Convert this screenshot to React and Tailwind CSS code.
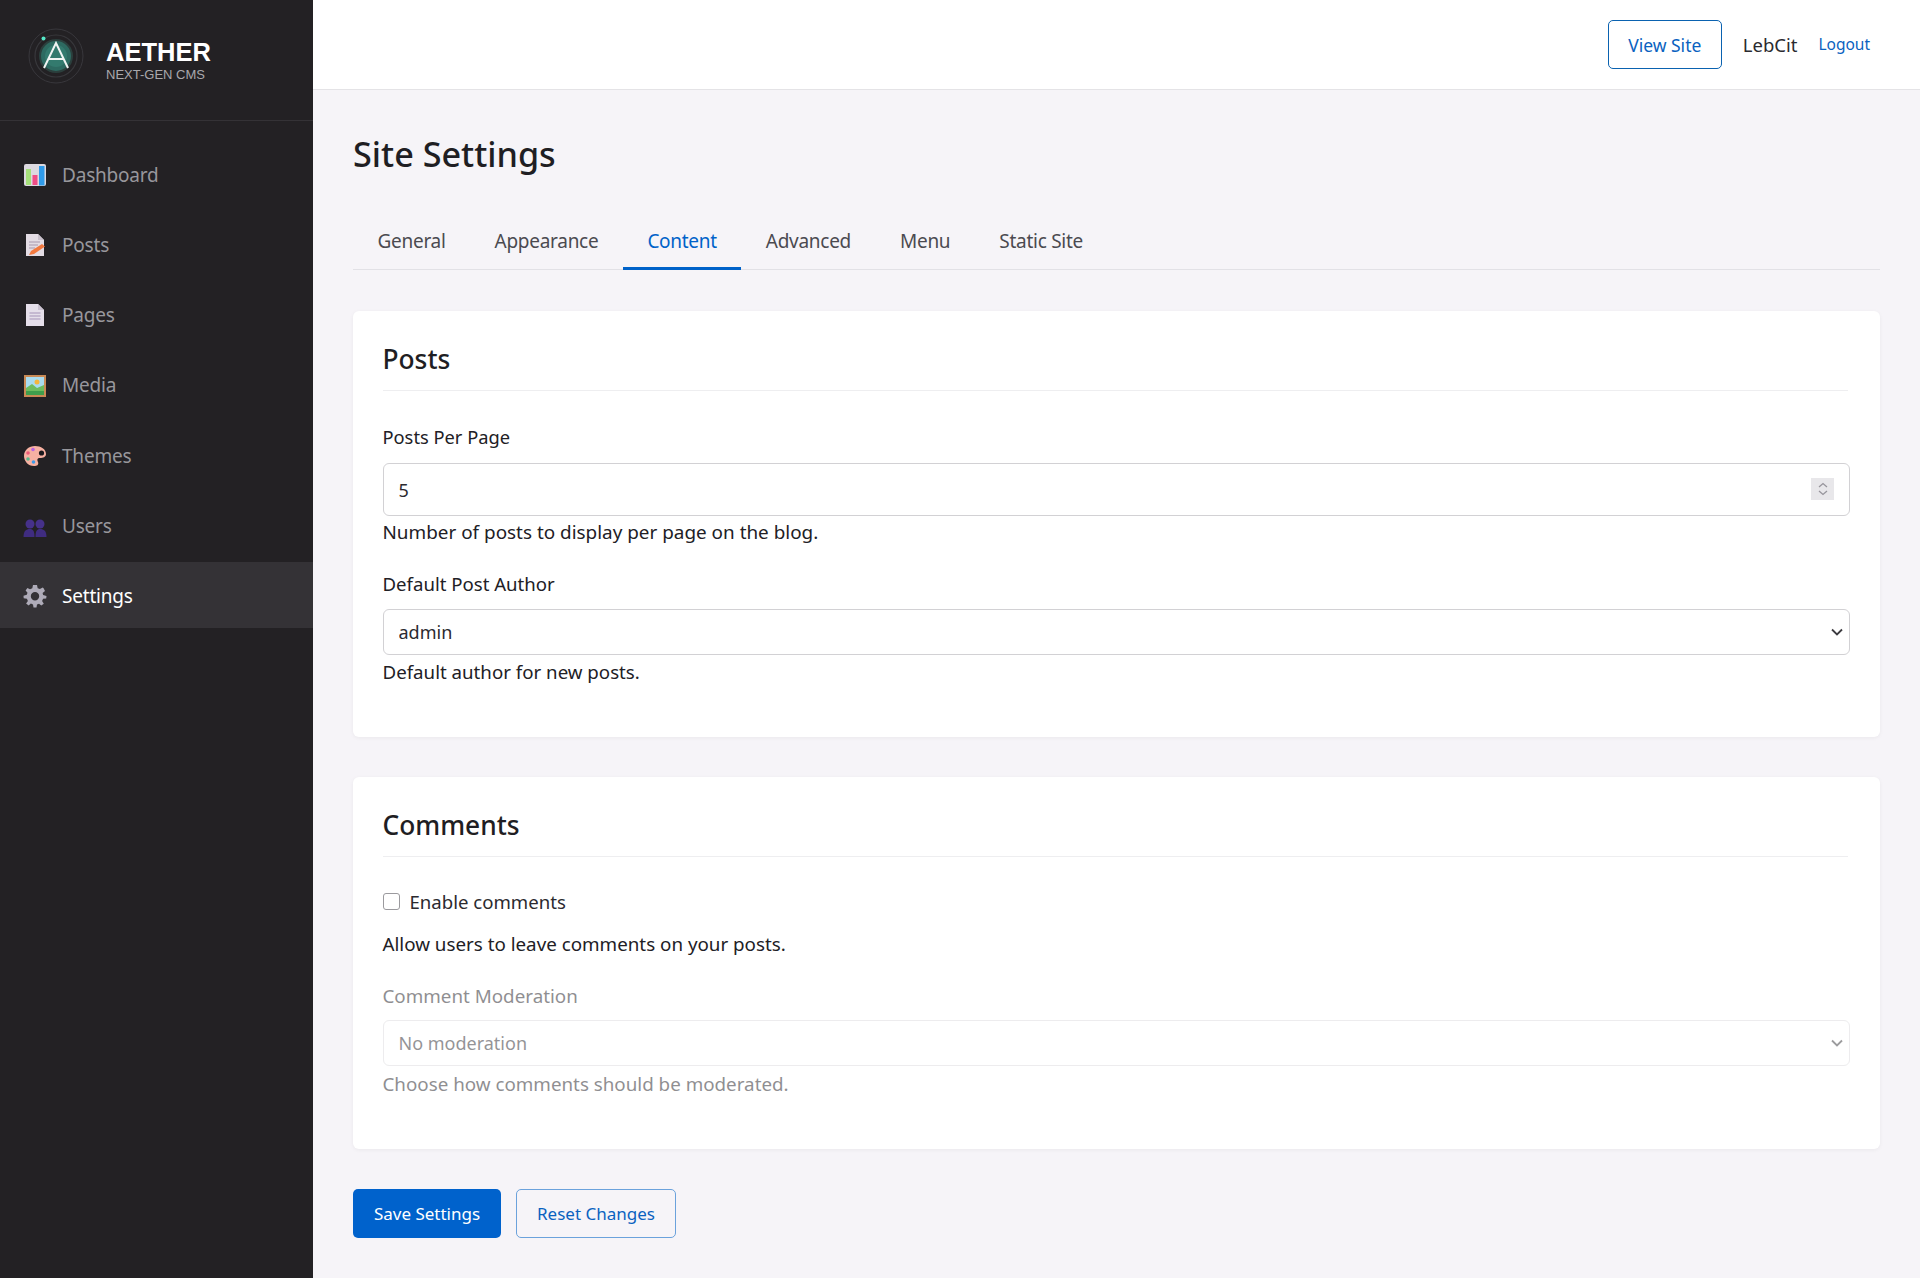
function Logo() {
  return (
    <svg width="56" height="56" viewBox="0 0 56 56" className="shrink-0">
      <circle cx="28" cy="28" r="27" fill="none" stroke="#38373c" strokeWidth="1" />
      <circle cx="28" cy="28" r="21" fill="none" stroke="#38383c" strokeWidth="1.2" />
      <circle cx="28" cy="28" r="16" fill="#2d6a61" stroke="#2b3f3d" strokeWidth="2" />
      <circle cx="28" cy="28" r="11" fill="#3a8a7c" opacity="0.5" />
      <path d="M16 40 L28 15 L40 40 M21 31 H35" fill="none" stroke="#f1f4f3" strokeWidth="2" />
      <circle cx="15.5" cy="10.5" r="2" fill="#55e8c8" />
    </svg>
  );
}
const icons = {
  Dashboard: (
    <svg width="24" height="24" viewBox="0 0 24 24">
      <rect x="1" y="1" width="22" height="22" rx="2" fill="#dcd9e0" />
      <rect x="3" y="6" width="5" height="16" fill="#a5e07a" />
      <rect x="9.5" y="12" width="5" height="10" fill="#ef4d86" />
      <rect x="16" y="3" width="5.5" height="19.5" fill="#2f9bea" />
    </svg>
  ),
  Posts: (
    <svg width="24" height="24" viewBox="0 0 24 24">
      <path d="M3 1 H15 L21 7 V23 H3 Z" fill="#e3dce4" />
      <path d="M15 1 L21 7 H15 Z" fill="#c9c1cc" />
      <path d="M6 9 H17 M6 12 H15 M6 15 H12" stroke="#a898ae" strokeWidth="1" />
      <path d="M6 22 L8 18 L19 11 L22 13.5 L11 21 Z" fill="#f2793f" />
    </svg>
  ),
  Pages: (
    <svg width="24" height="24" viewBox="0 0 24 24">
      <path d="M3 1 H15 L21 7 V23 H3 Z" fill="#e5dfea" />
      <path d="M15 1 L21 7 H15 Z" fill="#cbc3d2" />
      <path d="M6.5 10 H17.5 M6.5 13 H17.5 M6.5 16 H17.5" stroke="#a594b8" strokeWidth="1.1" />
    </svg>
  ),
  Media: (
    <svg width="24" height="24" viewBox="0 0 24 24">
      <rect x="1" y="1" width="22" height="22" fill="#c98a55" />
      <rect x="3" y="3" width="18" height="18" fill="#a9dcf0" />
      <circle cx="14" cy="8" r="2.5" fill="#f4b63d" />
      <path d="M3 14 L9 10 L14 14 L21 11 V21 H3 Z" fill="#6dbd5f" />
      <path d="M3 17 H21 V21 H3 Z" fill="#3f9e4c" />
    </svg>
  ),
  Themes: (
    <svg width="24" height="24" viewBox="0 0 24 24">
      <path d="M12 2 C18 2 23 5 23 10 C23 13 20 14 17 14 C14 14 14 16 15 18 C16 21 14 22 11 22 C5 22 1 17 1 12 C1 6 6 2 12 2 Z" fill="#f7b1a2" />
      <circle cx="10" cy="5.5" r="1.8" fill="#b964e0" />
      <circle cx="5" cy="9" r="1.8" fill="#ec5b78" />
      <circle cx="5" cy="15" r="1.8" fill="#58b98c" />
      <circle cx="10.5" cy="18" r="1.8" fill="#3f9be8" />
      <circle cx="18.5" cy="9" r="2.6" fill="#1a181c" />
    </svg>
  ),
  Users: (
    <svg width="24" height="24" viewBox="0 0 24 24">
      <circle cx="7" cy="10" r="4.5" fill="#46318a" />
      <circle cx="17" cy="10" r="4.5" fill="#46318a" />
      <path d="M0.5 23 C0.5 17 3 15 7 15 C10 15 11.5 17 11.5 23 Z" fill="#3f2c80" />
      <path d="M12.5 23 C12.5 17 14 15 17 15 C21 15 23.5 17 23.5 23 Z" fill="#3f2c80" />
    </svg>
  ),
  Settings: (
    <svg width="24" height="24" viewBox="0 0 24 24">
      <path fillRule="evenodd" clipRule="evenodd" d="M10 1 H14 L14.7 4.2 L16.9 5.1 L19.7 3.4 L20.6 4.3 L22 6.9 L19.6 9 L20.1 11 L23.5 12 L23.2 14.4 L20.1 14.7 L19.1 16.9 L20.8 19.7 L18.3 21.4 L16 19.7 L14 20.4 L13.5 23.5 H10.5 L10 20.4 L7.9 19.6 L5.6 21.4 L3.1 19.6 L4.9 16.9 L3.9 14.8 L0.7 14.3 L0.5 11.8 L3.8 10.8 L4.5 8.8 L2.6 6.4 L4.4 4 L7 5.3 L9.3 4.3 Z M12 8 A4.2 4.2 0 1 0 12 16.4 A4.2 4.2 0 1 0 12 8 Z" fill="#aeabb8" />
    </svg>
  ),
};
const nav = ["Dashboard", "Posts", "Pages", "Media", "Themes", "Users", "Settings"];

function Tab({ label, active }) {
  return (
    <div className={"px-[24.5px] pt-[2px] h-[57px] flex items-center text-[19px] tracking-[-0.28px] border-b-[3px] -mb-px " + (active ? "border-[#0062c9] text-[#0062c9]" : "border-transparent text-[#4b4a50]")}>
      {label}
    </div>
  );
}
function Card({ title, children, className }) {
  return (
    <section className={"bg-white rounded-[6px] shadow-[0_1px_4px_rgba(0,0,0,0.05)] pl-[29.5px] pr-[30px] pt-[30px] " + className}>
      <h2 className="text-[26.3px] leading-[37px] font-medium text-[#1f1e23] pb-[12px] mr-[2px] border-b border-[#eeeef0]">{title}</h2>
      {children}
    </section>
  );
}
function Chevron({ color }) {
  return (
    <svg width="12" height="8" viewBox="0 0 12 8" fill="none" stroke={color} strokeWidth="1.8" className="absolute right-[7px] top-[19px] pointer-events-none">
      <path d="M1 1.5 L6 6.5 L11 1.5" />
    </svg>
  );
}

export default function App() {
  return (
    <div className="flex min-h-[1278px] bg-[#f6f4f8] font-['Noto_Sans','Open_Sans',sans-serif] text-[#212025]">
      <aside className="w-[313px] shrink-0 bg-[#232124]">
        <div className="h-[121px] border-b border-[#343236] flex items-center pl-[28px] pb-[8px] gap-[22px]">
          <Logo />
          <div className="font-['Liberation_Sans',sans-serif] mt-[6px]">
            <div className="text-[25.5px] leading-[30px] font-bold text-white">AETHER</div>
            <div className="text-[13px] leading-[15px] text-[#a9a8ac]">NEXT-GEN CMS</div>
          </div>
        </div>
        <nav className="pt-[20px] flex flex-col gap-[4.2px]">
          {nav.map((n) => (
            <div key={n} className={"h-[66px] pt-[2px] flex items-center gap-[15px] pl-[23px] text-[19px] tracking-[-0.2px] " + (n === "Settings" ? "bg-[#343236] text-white" : "text-[#98979c]")}>
              {icons[n]}
              <span>{n}</span>
            </div>
          ))}
        </nav>
      </aside>
      <div className="flex-1 flex flex-col min-w-0">
        <header className="h-[90px] bg-white border-b border-[#e4e3e6] flex items-center justify-end pr-[50px]">
          <button className="w-[114px] h-[49px] border-[1.5px] border-[#0a62b0] rounded-[5px] text-[#0a62c0] text-[17.5px] pt-[1px]">View Site</button>
          <span className="ml-[21px] text-[18.5px] text-[#2b2a2f]">LebCit</span>
          <span className="ml-[21px] text-[15.5px] text-[#0a62c0]">Logout</span>
        </header>
        <main className="flex-1 px-[40px] pt-[40px]">
          <h1 className="text-[34.2px] leading-[48px] font-medium text-[#1f1e23]">Site Settings</h1>
          <div className="mt-[35px] flex border-b border-[#e2e1e6]">
            {["General", "Appearance", "Content", "Advanced", "Menu", "Static Site"].map((t) => (
              <Tab key={t} label={t} active={t === "Content"} />
            ))}
          </div>
          <Card title="Posts" className="mt-[41px] h-[426px]">
            <label className="block mt-[33px] text-[18.3px] leading-[26px]">Posts Per Page</label>
            <div className="relative mt-[13px]">
              <input readOnly value="5" className="block w-full h-[53px] border border-[#d2d1d4] rounded-[6px] px-[15px] text-[18px] text-[#2b2a2f] bg-white outline-none" />
              <div className="absolute right-[16px] top-[15px] w-[23px] h-[22px] bg-[#e8e7ea] flex items-center justify-center">
                <svg width="12" height="16" viewBox="0 0 12 16" fill="none" stroke="#97959c" strokeWidth="1.3">
                  <path d="M2 6 L6 2.5 L10 6 M2 10 L6 13.5 L10 10" />
                </svg>
              </div>
            </div>
            <p className="mt-[3px] text-[18.9px] leading-[26px]">Number of posts to display per page on the blog.</p>
            <label className="block mt-[26px] text-[18.6px] leading-[26px]">Default Post Author</label>
            <div className="relative mt-[12px]">
              <select defaultValue="admin" className="block w-full h-[46px] appearance-none border border-[#d2d1d4] rounded-[6px] px-[15px] text-[18px] text-[#2b2a2f] bg-white outline-none">
                <option>admin</option>
              </select>
              <Chevron color="#3c3b40" />
            </div>
            <p className="mt-[4px] text-[18.7px] leading-[26px]">Default author for new posts.</p>
          </Card>
          <Card title="Comments" className="mt-[40px] h-[372px]">
            <label className="flex items-center mt-[32px] text-[18.6px] leading-[26px] text-[#2b2a2f]">
              <input type="checkbox" className="w-[17px] h-[17px] m-0 appearance-none bg-white border border-[#9b9a9e] rounded-[3px] mr-[10px] -mt-[2px]" />
              Enable comments
            </label>
            <p className="mt-[16px] text-[18.8px] leading-[26px]">Allow users to leave comments on your posts.</p>
            <div className="opacity-50">
              <label className="block mt-[26px] text-[18.8px] leading-[26px]">Comment Moderation</label>
              <div className="relative mt-[11px]">
                <select disabled defaultValue="No moderation" className="block w-full h-[46px] appearance-none border border-[#dcdbde] rounded-[6px] px-[15px] text-[18px] text-[#2b2a2f] disabled:opacity-100 bg-white outline-none">
                  <option>No moderation</option>
                </select>
                <Chevron color="#3c3b40" />
              </div>
              <p className="mt-[5px] text-[18.8px] leading-[26px]">Choose how comments should be moderated.</p>
            </div>
          </Card>
          <div className="mt-[40px] flex gap-[15px]">
            <button className="w-[148px] h-[49px] bg-[#0062cc] rounded-[5px] text-white text-[17px]">Save Settings</button>
            <button className="w-[160px] h-[49px] border-[1.5px] border-[#6ba2dc] rounded-[5px] text-[#0a62c0] text-[17px]">Reset Changes</button>
          </div>
        </main>
      </div>
    </div>
  );
}
